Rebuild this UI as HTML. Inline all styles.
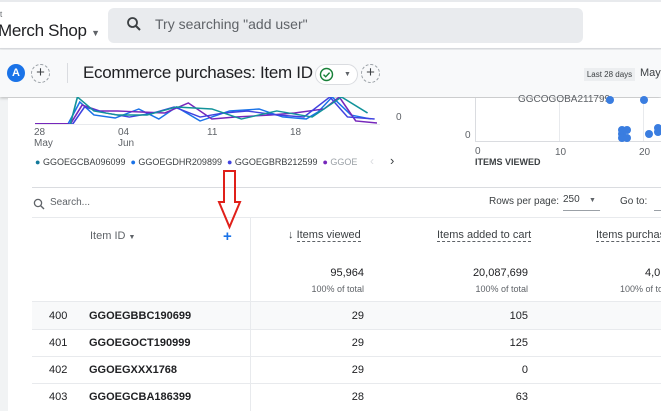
<!DOCTYPE html>
<html><head><style>
*{margin:0;padding:0;box-sizing:border-box}
body{width:661px;height:411px;overflow:hidden;background:#f1f3f4;font-family:"Liberation Sans",sans-serif;color:#202124;position:relative}
.a{position:absolute;white-space:nowrap}
.num{text-align:right}
</style></head><body>
<!-- header -->
<div class="a" style="left:0;top:0;width:661px;height:49px;background:#fff;border-bottom:1px solid #dadce0"></div>
<div class="a" style="left:0;top:0;width:661px;height:2px;background:#e8eaed"></div>
<div class="a" style="left:0;top:10px;font-size:8px;color:#5f6368">t</div>
<div class="a" style="left:-2px;top:21px;font-size:17px;color:#202124;letter-spacing:-0.3px">Merch Shop <span style="font-size:9px;color:#5f6368">▼</span></div>
<div class="a" style="left:108px;top:8px;width:475px;height:35px;background:#e9ebee;border-radius:6px"></div>
<svg class="a" style="left:126px;top:16px" width="16" height="16" viewBox="0 0 16 16"><circle cx="6.5" cy="6.5" r="4.5" fill="none" stroke="#3c4043" stroke-width="1.8"/><line x1="10" y1="10" x2="14" y2="14" stroke="#3c4043" stroke-width="2"/></svg>
<div class="a" style="left:155px;top:16px;font-size:14px;color:#5f6368">Try searching "add user"</div>
<!-- toolbar -->
<div class="a" style="left:0;top:50px;width:661px;height:47px;background:#f8f9fa;box-shadow:0 1px 3px rgba(0,0,0,.25)"></div>
<div class="a" style="left:7px;top:64px;width:18px;height:18px;border-radius:50%;background:#1a73e8;color:#fff;font-size:11px;font-weight:bold;text-align:center;line-height:18px">A</div>
<div class="a" style="left:31px;top:64px;width:19px;height:19px;border-radius:50%;border:1px dashed #9aa0a6;text-align:center;line-height:16px;font-size:15px;color:#3c4043">+</div>
<div class="a" style="left:67px;top:63px;width:1px;height:20px;background:#dadce0"></div>
<div class="a" style="left:83px;top:63px;font-size:17px;letter-spacing:-0.3px;color:#202124">Ecommerce purchases: Item ID</div>
<div class="a" style="left:315px;top:64px;width:43px;height:21px;border:1px solid #dadce0;border-radius:11px;background:#fff"></div>
<svg class="a" style="left:319px;top:67px" width="15" height="15" viewBox="0 0 15 15"><circle cx="7.5" cy="7.5" r="6" fill="none" stroke="#188038" stroke-width="1.4"/><path d="M4.5 7.6 L6.7 9.8 L10.6 5.6" fill="none" stroke="#188038" stroke-width="1.4"/></svg>
<div class="a" style="left:344px;top:71px;font-size:7px;color:#5f6368">▼</div>
<div class="a" style="left:361px;top:64px;width:19px;height:19px;border-radius:50%;border:1px dashed #9aa0a6;text-align:center;line-height:16px;font-size:15px;color:#3c4043">+</div>
<div class="a" style="left:584px;top:68px;width:51px;height:13px;background:#eceef0;font-size:8px;line-height:13px;text-align:center;color:#3c4043">Last 28 days</div>
<div class="a" style="left:640px;top:67px;font-size:11px;color:#3c4043">May</div>
<!-- content card -->
<div class="a" style="left:8px;top:98px;width:653px;height:313px;background:#fff"></div>
<!-- line chart -->
<svg class="a" style="left:35px;top:97px" width="342" height="30" viewBox="0 0 290 30" preserveAspectRatio="none">
<g fill="none" stroke-width="1.4">
<path d="M0 27 L28 27 L38 5 L50 18 L68 21 L88 12 L105 22 L120 10 L140 24 L165 14 L190 12 L210 20 L230 22 L240 15 L252 0 L268 18 L285 22" stroke="#1a73e8"/>
<path d="M0 27 L30 27 L40 8 L55 14 L70 14 L90 15 L110 16 L130 6 L150 22 L170 20 L200 18 L220 16 L245 12 L258 0 L272 24 L290 26" stroke="#7627bb"/>
<path d="M0 27 L32 27 L42 10 L60 16 L80 20 L100 16 L118 10 L140 20 L160 16 L180 14 L205 18 L228 20 L250 0 L265 20 L288 22" stroke="#4043e0"/>
<path d="M30 27 L36 0 L50 14 L70 18 L95 18 L120 10 L150 12 L175 22 L205 14 L235 20 L260 0 L282 16" stroke="#12939a"/>
<path d="M0 27 L28 27" stroke="#7627bb" stroke-width="2"/>
</g></svg>
<div class="a" style="left:396px;top:112px;font-size:10px;color:#5f6368">0</div>
<div class="a" style="left:34px;top:127px;font-size:10px;line-height:11px;color:#5f6368">28<br>May</div>
<div class="a" style="left:118px;top:127px;font-size:10px;line-height:11px;color:#5f6368">04<br>Jun</div>
<div class="a" style="left:207px;top:127px;font-size:10px;color:#5f6368">11</div>
<div class="a" style="left:290px;top:127px;font-size:10px;color:#5f6368">18</div>
<div class="a" style="left:35px;top:124px;width:345px;height:1px;background:#e8eaed"></div>
<div class="a" style="left:35px;top:157px;font-size:9px;color:#3c4043"><span style="color:#12799a">●</span> GGOEGCBA096099 &nbsp;<span style="color:#1a73e8">●</span> GGOEGDHR209899 &nbsp;<span style="color:#4043e0">●</span> GGOEGBRB212599 &nbsp;<span style="color:#7627bb">●</span> <span style="color:#9aa0a6">GGOE</span></div>
<div class="a" style="left:370px;top:154px;font-size:12px;color:#dadce0">‹</div>
<div class="a" style="left:390px;top:153px;font-size:13px;color:#3c4043">›</div>
<!-- scatter -->
<div class="a" style="left:475px;top:98px;width:1px;height:44px;background:#dadce0"></div>
<div class="a" style="left:475px;top:141px;width:186px;height:1px;background:#dadce0"></div>
<div class="a" style="left:559px;top:98px;width:1px;height:43px;background:#e8eaed"></div>
<div class="a" style="left:643px;top:98px;width:1px;height:43px;background:#e8eaed"></div>
<div class="a" style="left:518px;top:94px;font-size:10px;color:#5f6368">GGCOGOBA211799</div>
<div class="a" style="left:465px;top:130px;font-size:10px;color:#5f6368">0</div>
<div class="a" style="left:475px;top:147px;font-size:10px;line-height:10px;color:#5f6368">0<br><b style="color:#3c4043;font-size:9px">ITEMS VIEWED</b></div>
<div class="a" style="left:555px;top:147px;font-size:10px;color:#5f6368">10</div>
<div class="a" style="left:639px;top:147px;font-size:10px;color:#5f6368">20</div>
<svg class="a" style="left:600px;top:92px" width="61" height="50"><g fill="#3a7de0"><circle cx="10" cy="8" r="4"/><circle cx="44" cy="8" r="4"/><circle cx="22" cy="42" r="4"/><circle cx="22" cy="38" r="4"/><circle cx="22" cy="46" r="4"/><circle cx="27" cy="38" r="4"/><circle cx="27" cy="46" r="4"/><circle cx="49" cy="42" r="4"/><circle cx="58" cy="40" r="4"/><circle cx="58" cy="36" r="4"/></g></svg>
<!-- table -->
<div class="a" style="left:32px;top:187px;width:629px;height:1px;background:#dadce0"></div>
<svg class="a" style="left:33px;top:198px" width="12" height="12" viewBox="0 0 12 12"><circle cx="5" cy="5" r="3.6" fill="none" stroke="#5f6368" stroke-width="1.3"/><line x1="7.6" y1="7.6" x2="11" y2="11" stroke="#5f6368" stroke-width="1.4"/></svg>
<div class="a" style="left:50px;top:197px;font-size:10px;color:#5f6368">Search...</div>
<div class="a" style="left:489px;top:196px;font-size:10px;color:#3c4043">Rows per page:</div>
<div class="a" style="left:563px;top:194px;font-size:10px;color:#3c4043">250</div>
<div class="a" style="left:563px;top:210px;width:37px;height:1px;background:#9aa0a6"></div>
<div class="a" style="left:589px;top:197px;font-size:7px;color:#5f6368">▼</div>
<div class="a" style="left:620px;top:196px;font-size:10px;color:#3c4043">Go to:</div>
<div class="a" style="left:654px;top:210px;width:7px;height:1px;background:#9aa0a6"></div>
<div class="a" style="left:32px;top:217px;width:629px;height:1px;background:#e8eaed"></div>
<div class="a" style="left:250px;top:218px;width:1px;height:193px;background:#e8eaed"></div>
<div class="a" style="left:90px;top:230px;font-size:11px;color:#5f6368">Item ID <span style="font-size:7px">▼</span></div>
<div class="a" style="left:223px;top:228px;font-size:15px;font-weight:bold;color:#1a73e8">+</div>
<div class="a" style="left:288px;top:229px;font-size:11px;color:#3c4043">↓ <span style="border-bottom:1px dashed #5f6368">Items viewed</span></div>
<div class="a" style="left:437px;top:229px;font-size:11px;color:#3c4043;border-bottom:1px dashed #5f6368">Items added to cart</div>
<div class="a" style="left:596px;top:229px;font-size:11px;color:#3c4043;border-bottom:1px dashed #5f6368">Items purchas</div>
<div class="a num" style="left:280px;top:267px;width:84px;font-size:11px;color:#202124">95,964</div>
<div class="a num" style="left:280px;top:284px;width:84px;font-size:9px;color:#5f6368">100% of total</div>
<div class="a num" style="left:420px;top:267px;width:108px;font-size:11px;color:#202124">20,087,699</div>
<div class="a num" style="left:420px;top:284px;width:108px;font-size:9px;color:#5f6368">100% of total</div>
<div class="a" style="left:645px;top:267px;font-size:11px">4,0</div>
<div class="a" style="left:620px;top:284px;font-size:9px;color:#5f6368">100% of to</div>
<div class="a" style="left:32px;top:301px;width:629px;height:28px;background:#f8f9fa;border-top:1px solid #e8eaed"></div>
<div class="a" style="left:32px;top:329px;width:629px;height:1px;background:#e8eaed"></div>
<div class="a" style="left:32px;top:356px;width:629px;height:1px;background:#e8eaed"></div>
<div class="a" style="left:32px;top:383px;width:629px;height:1px;background:#e8eaed"></div>
<div class="a" style="left:250px;top:301px;width:1px;height:110px;background:#e8eaed"></div>
<div style="font-size:11px">
<div class="a" style="left:49px;top:310px">400</div><div class="a" style="left:89px;top:310px;font-weight:bold">GGOEGBBC190699</div><div class="a num" style="left:300px;top:310px;width:64px">29</div><div class="a num" style="left:440px;top:310px;width:88px">105</div>
<div class="a" style="left:49px;top:337px">401</div><div class="a" style="left:89px;top:337px;font-weight:bold">GGOEGOCT190999</div><div class="a num" style="left:300px;top:337px;width:64px">29</div><div class="a num" style="left:440px;top:337px;width:88px">125</div>
<div class="a" style="left:49px;top:364px">402</div><div class="a" style="left:89px;top:364px;font-weight:bold">GGOEGXXX1768</div><div class="a num" style="left:300px;top:364px;width:64px">29</div><div class="a num" style="left:440px;top:364px;width:88px">0</div>
<div class="a" style="left:49px;top:391px">403</div><div class="a" style="left:89px;top:391px;font-weight:bold">GGOEGCBA186399</div><div class="a num" style="left:300px;top:391px;width:64px">28</div><div class="a num" style="left:440px;top:391px;width:88px">63</div>
</div>
<!-- red arrow -->
<svg class="a" style="left:215px;top:168px" width="30" height="64" viewBox="0 0 30 64"><path d="M9 3 L20 3 L20 34 L25 34 L14.5 59 L4 34 L9 34 Z" fill="none" stroke="#e0201a" stroke-width="2"/></svg>
</body></html>
